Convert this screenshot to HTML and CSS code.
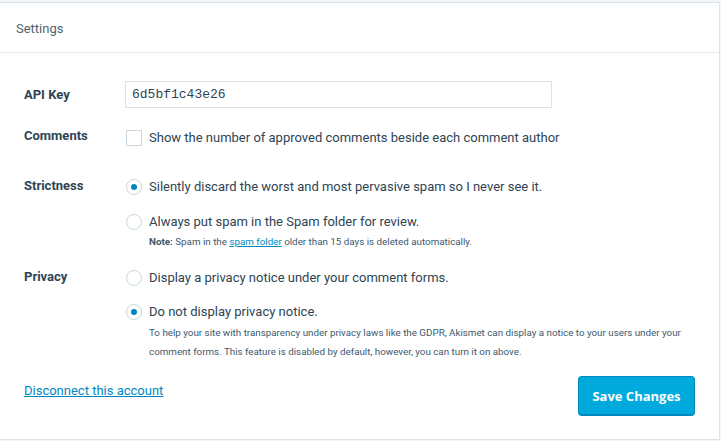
FILE: index.html
```html
<!DOCTYPE html>
<html lang="en">
<head>
<meta charset="utf-8">
<title>Akismet Settings</title>
<link rel="stylesheet" href="styles.css">
</head>
<body>
<section class="card">
  <header class="card-header">Settings</header>
  <form class="card-body">
    <div class="row row-api">
      <label class="label" for="key">API Key</label>
      <div class="control">
        <input id="key" class="text-input" type="text" value="6d5bf1c43e26">
      </div>
    </div>
    <div class="row row-comments">
      <div class="label">Comments</div>
      <div class="control">
        <label class="option"><input class="check" type="checkbox"><span>Show the number of approved comments beside each comment author</span></label>
      </div>
    </div>
    <div class="row row-strict">
      <div class="label">Strictness</div>
      <div class="control">
        <label class="option"><input class="radio" type="radio" name="strict" checked><span>Silently discard the worst and most pervasive spam so I never see it.</span></label>
        <label class="option option-second"><input class="radio" type="radio" name="strict"><span>Always put spam in the Spam folder for review.</span></label>
        <p class="note note-spam"><strong>Note:</strong> Spam in the <a href="#">spam folder</a> older than 15 days is deleted automatically.</p>
      </div>
    </div>
    <div class="row row-privacy">
      <div class="label">Privacy</div>
      <div class="control">
        <label class="option"><input class="radio" type="radio" name="privacy"><span>Display a privacy notice under your comment forms.</span></label>
        <label class="option option-second option-tight"><input class="radio" type="radio" name="privacy" checked><span>Do not display privacy notice.</span></label>
        <p class="note note-privacy">To help your site with transparency under privacy laws like the GDPR, Akismet can display a notice to your users under your comment forms. This feature is disabled by default, however, you can turn it on above.</p>
      </div>
    </div>
    <div class="footer">
      <a class="disconnect" href="#">Disconnect this account</a>
      <button class="save" type="button">Save Changes</button>
    </div>
  </form>
</section>
</body>
</html>
```
FILE: styles.css
```css
html, body {
  margin: 0;
  padding: 0;
}
body {
  background: #f3f6f8;
  font-family: Roboto, "Open Sans", sans-serif;
  font-size: 13px;
  color: #2e4453;
  padding-top: 2px;
  padding-right: 1px;
}
.card {
  background: #fff;
  border: 1px solid #dce3e8;
  border-left: none;
  height: 438px;
  box-sizing: border-box;
}
.card-header {
  height: 50px;
  box-sizing: border-box;
  padding: 15px 16px 0;
  border-bottom: 1px solid #e2e9ee;
  color: #51626f;
  font-size: 13px;
  line-height: 22px;
}
.card-body {
  margin: 0;
  padding: 28px 24px 0;
}
.row {
  display: grid;
  grid-template-columns: 101px 1fr;
  align-items: start;
}
.label {
  font-weight: 700;
  line-height: 20px;
  color: #2e4453;
}
.row-api {
  margin-bottom: 20px;
}
.row-api .label {
  line-height: 27px;
}
.row-comments {
  margin-bottom: 29px;
}
.row-comments .label {
  margin-top: -2px;
}
.row-strict {
  margin-bottom: 17px;
}
.row-strict .label {
  margin-top: -1px;
}
.row-privacy .label {
  margin-top: -1px;
}
.text-input {
  display: block;
  width: 427px;
  height: 27px;
  box-sizing: border-box;
  margin: 0;
  padding: 0 6px;
  border: 1px solid #dce3e8;
  font-family: "Liberation Mono", monospace;
  font-size: 13px;
  color: #2e4453;
  background: #fff;
  outline: none;
}
.option {
  display: flex;
  align-items: center;
  gap: 7px;
  line-height: 20px;
  color: #2e4453;
}
.option-second {
  margin-top: 15px;
}
.option-tight {
  margin-top: 14px;
}
.check, .radio {
  appearance: none;
  -webkit-appearance: none;
  width: 16px;
  height: 16px;
  margin: 0 0 0 1px;
  box-sizing: border-box;
  border: 1px solid #c8d7e1;
  background: #fff;
  flex: none;
  position: relative;
}
.check {
  border-radius: 1px;
}
.radio {
  border-radius: 50%;
}
.radio:checked::after {
  content: "";
  position: absolute;
  left: 4px;
  top: 4px;
  width: 6px;
  height: 6px;
  border-radius: 50%;
  background: #0087be;
}
.note {
  margin: 0 0 0 24px;
  font-size: 9.8px;
  color: #3d596d;
}
.note-spam {
  margin-top: 1px;
  line-height: 18px;
}
.note-spam strong {
  font-weight: 700;
}
.note a {
  color: #0087be;
}
.note-privacy {
  margin-top: 1px;
  line-height: 19px;
  max-width: 546px;
}
.footer {
  display: flex;
  justify-content: space-between;
  align-items: flex-start;
  margin-top: 15px;
}
.disconnect {
  margin-top: 5px;
  line-height: 20px;
  color: #0087be;
  text-decoration: underline;
}
.save {
  height: 40px;
  width: 117px;
  box-sizing: border-box;
  padding: 0;
  border: 1px solid #0087be;
  border-bottom-width: 2px;
  border-radius: 4px;
  background: #00aadc;
  color: #fff;
  font-family: "Open Sans", "Noto Sans", sans-serif;
  font-weight: 700;
  font-size: 13px;
  cursor: pointer;
}
```
